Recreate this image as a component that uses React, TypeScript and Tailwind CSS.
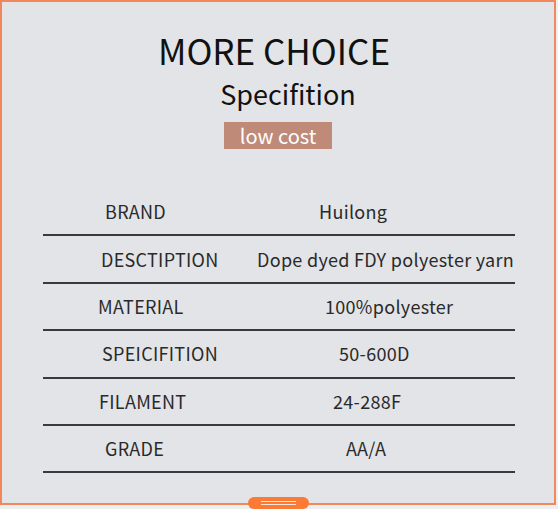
import React from "react";

const rows = [
  { label: "BRAND", value: "Huilong", lp: "pl-[62px]", vp: "pl-[276px]" },
  { label: "DESCTIPTION", value: "Dope dyed FDY polyester yarn", lp: "pl-[58px]", vp: "pl-[214px]" },
  { label: "MATERIAL", value: "100%polyester", lp: "pl-[55px]", vp: "pl-[282px]" },
  { label: "SPEICIFITION", value: "50-600D", lp: "pl-[59px]", vp: "pl-[296px]" },
  { label: "FILAMENT", value: "24-288F", lp: "pl-[56px]", vp: "pl-[290px]" },
  { label: "GRADE", value: "AA/A", lp: "pl-[62px]", vp: "pl-[303px]" },
];

export default function App() {
  return (
    <div
      className="w-[558px] h-[509px] bg-[#eceef0] relative overflow-hidden"
      style={{ fontFamily: '"Noto Sans CJK SC", "Noto Sans", sans-serif' }}
    >
      <div className="w-[556px] h-[505px] border-2 border-[#f2885a] bg-[#e2e4e7] flex flex-col items-center">
        <div className="mt-[27px] text-[35px] leading-[42px] text-[#111] -ml-[8px]">MORE CHOICE</div>
        <div className="mt-[6px] text-[27px] leading-[34px] text-[#111] ml-[20px]">Specifition</div>
        <div className="mt-[11px] w-[108px] h-[27px] bg-[#bf8a78] text-white text-[20px] leading-[27px] text-center">
          low cost
        </div>
        <div className="mt-[40px] w-[472px] self-start ml-[41px] flex flex-col">
          {rows.map((r) => (
            <div key={r.label} className="h-[47.4px] border-b-2 border-[#3a3a3a] relative flex items-center text-[18px] tracking-[0.3px] text-[#2a2a2a]">
              <div className={`absolute left-0 ${r.lp}`}>{r.label}</div>
              <div className={`absolute left-0 whitespace-nowrap ${r.vp}`}>{r.value}</div>
            </div>
          ))}
        </div>
      </div>
      <div className="absolute left-[248px] top-[497px] w-[61px] h-[12px] rounded-full bg-[#fb7a35] flex flex-col items-center justify-center gap-[2px]">
        <div className="w-[35px] h-[1px] bg-[#ffe3d0]"></div>
        <div className="w-[35px] h-[1px] bg-[#ffe3d0]"></div>
      </div>
    </div>
  );
}
